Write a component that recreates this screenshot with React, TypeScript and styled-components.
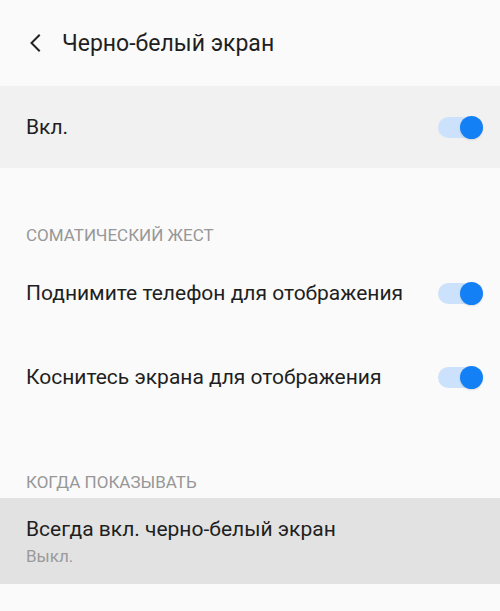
import React, { useState } from "react";
import styled, { createGlobalStyle } from "styled-components";

const GlobalStyle = createGlobalStyle`
  html, body {
    margin: 0;
    padding: 0;
    background: #fafafa;
  }
  body {
    font-family: Roboto, "Noto Sans", "Liberation Sans", sans-serif;
    -webkit-font-smoothing: antialiased;
  }
`;

const Screen = styled.div`
  width: 500px;
  height: 611px;
  background: #fafafa;
  overflow: hidden;
  display: flex;
  flex-direction: column;
`;

const Header = styled.header`
  height: 86px;
  display: flex;
  align-items: center;
  padding-left: 26px;
  box-sizing: border-box;
  gap: 18px;
`;

const BackButton = styled.button`
  width: 18px;
  height: 24px;
  padding: 0;
  border: none;
  background: none;
  display: flex;
  align-items: center;
  justify-content: center;
  color: #222;
  cursor: pointer;
`;

const Title = styled.h1`
  margin: 0;
  font-size: 23px;
  font-weight: 400;
  color: #1f1f1f;
`;

const Row = styled.div<{ $bg?: string; $height?: number }>`
  height: ${({ $height }) => $height ?? 84}px;
  background: ${({ $bg }) => $bg ?? "transparent"};
  display: flex;
  align-items: center;
  justify-content: space-between;
  padding: 0 18px 0 26px;
  box-sizing: border-box;
`;

const RowText = styled.div`
  display: flex;
  flex-direction: column;
  gap: 4px;
  padding-top: 2px;
`;

const RowTitle = styled.span`
  font-size: 21px;
  color: #1f1f1f;
  line-height: 24px;
`;

const RowSub = styled.span`
  font-size: 17px;
  color: #9a9a9a;
  line-height: 22px;
`;

const SectionHeader = styled.div<{ $height: number }>`
  height: ${({ $height }) => $height}px;
  display: flex;
  align-items: flex-end;
  padding: 0 26px 6px;
  box-sizing: border-box;
  font-size: 17px;
  line-height: 20px;
  color: #979797;
  text-transform: uppercase;
`;

const Track = styled.button<{ $on: boolean }>`
  position: relative;
  width: 44px;
  height: 21px;
  border-radius: 11px;
  border: none;
  padding: 0;
  background: ${({ $on }) => ($on ? "#cce1fb" : "#d6d6d6")};
  cursor: pointer;
`;

const Thumb = styled.span<{ $on: boolean }>`
  position: absolute;
  top: -1px;
  left: ${({ $on }) => ($on ? "22px" : "0px")};
  width: 23px;
  height: 23px;
  border-radius: 50%;
  background: ${({ $on }) => ($on ? "#1380f5" : "#f2f2f2")};
  box-shadow: 0 1px 2px rgba(0, 0, 0, 0.12);
`;

function Toggle({ on, onClick }: { on: boolean; onClick: () => void }) {
  return (
    <Track $on={on} onClick={onClick}>
      <Thumb $on={on} />
    </Track>
  );
}

export default function App() {
  const [enabled, setEnabled] = useState(true);
  const [lift, setLift] = useState(true);
  const [tap, setTap] = useState(true);

  return (
    <Screen>
      <GlobalStyle />
      <Header>
        <BackButton aria-label="Назад">
          <svg width="12" height="18" viewBox="0 0 12 18" fill="none">
            <path d="M10 1.5 L2.5 9 L10 16.5" stroke="currentColor" strokeWidth="2" strokeLinecap="square" />
          </svg>
        </BackButton>
        <Title>Черно-белый экран</Title>
      </Header>

      <Row $bg="#f1f1f1" $height={82}>
        <RowTitle>Вкл.</RowTitle>
        <Toggle on={enabled} onClick={() => setEnabled(!enabled)} />
      </Row>

      <SectionHeader $height={83}>Соматический жест</SectionHeader>
      <Row>
        <RowTitle>Поднимите телефон для отображения</RowTitle>
        <Toggle on={lift} onClick={() => setLift(!lift)} />
      </Row>
      <Row>
        <RowTitle>Коснитесь экрана для отображения</RowTitle>
        <Toggle on={tap} onClick={() => setTap(!tap)} />
      </Row>

      <SectionHeader $height={79}>Когда показывать</SectionHeader>
      <Row $bg="#e2e2e2" $height={86}>
        <RowText>
          <RowTitle>Всегда вкл. черно-белый экран</RowTitle>
          <RowSub>Выкл.</RowSub>
        </RowText>
      </Row>
    </Screen>
  );
}
